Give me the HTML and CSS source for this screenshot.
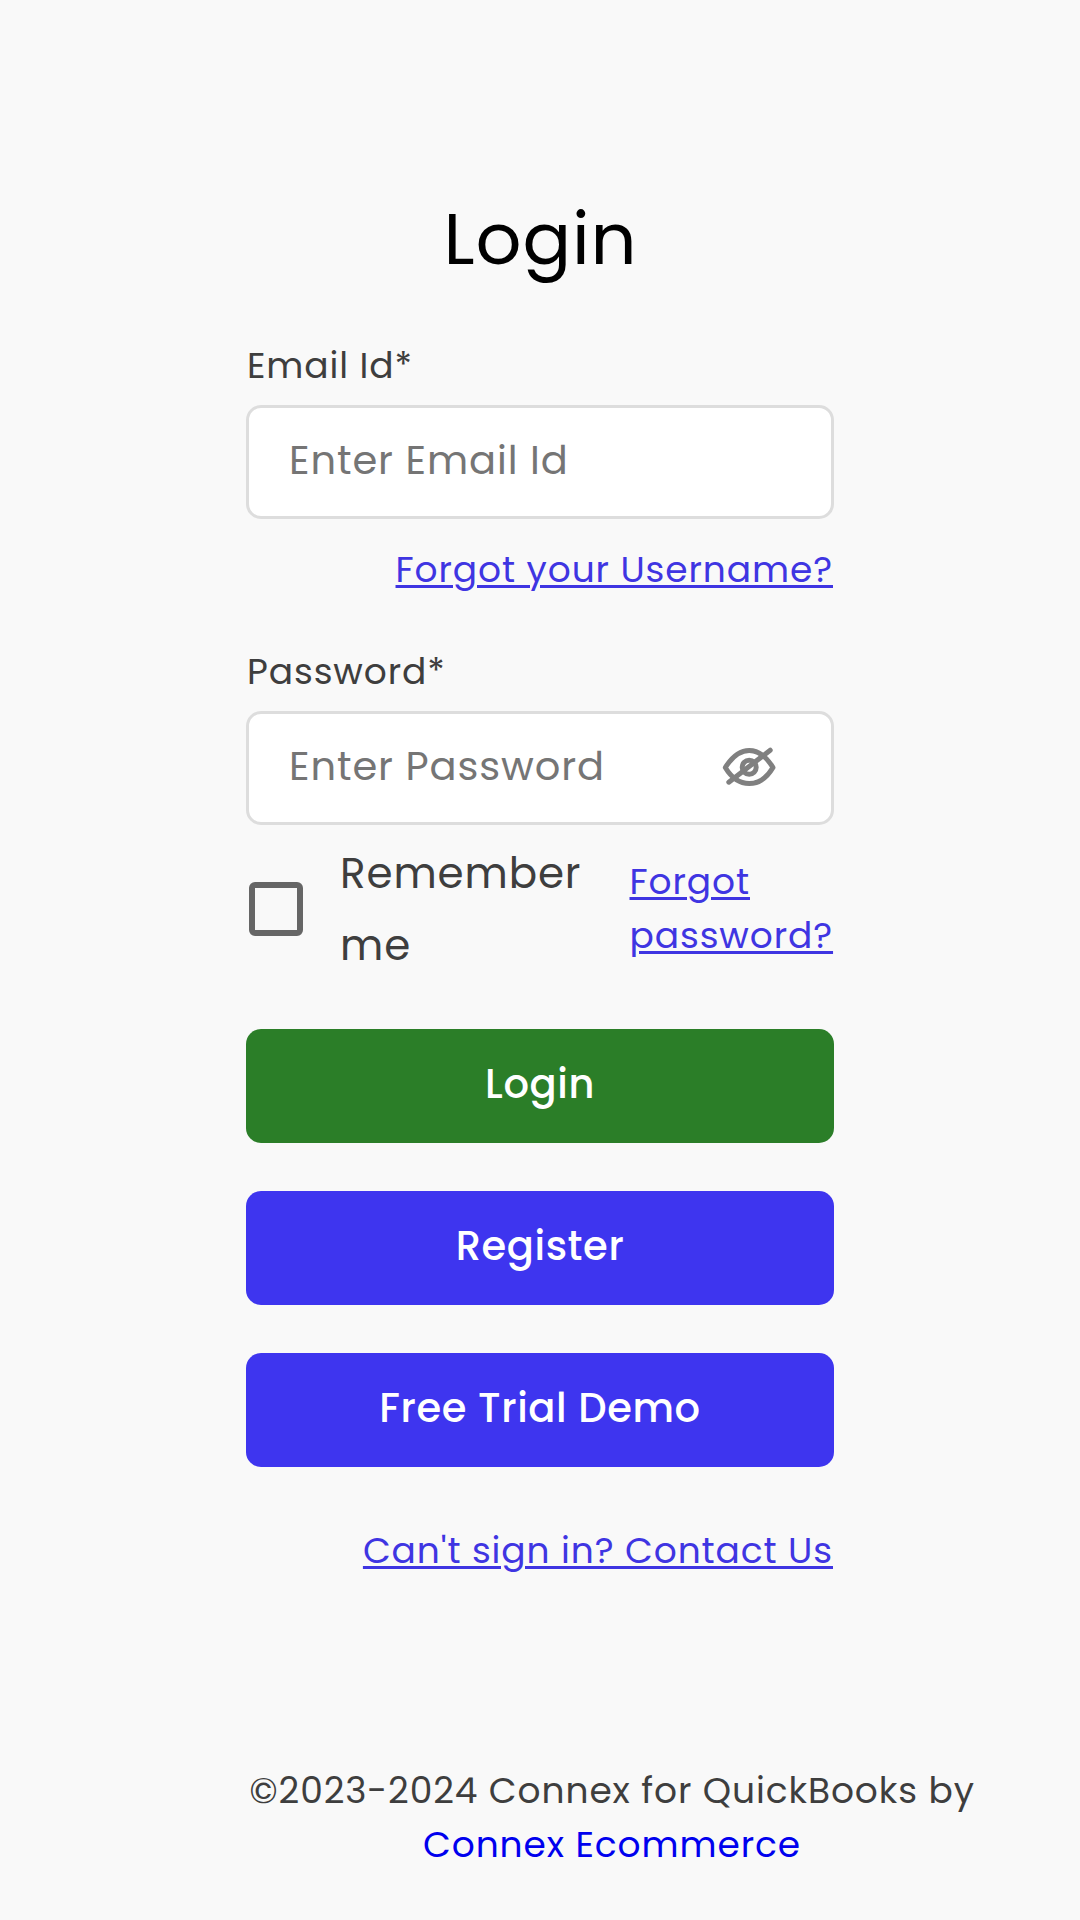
FILE: index.html
```html
<!DOCTYPE html>
<html lang="en">
<head>
  <meta charset="utf-8">
  <title>Login</title>
  <link rel="stylesheet" href="styles.css">
</head>
<body>
  <main class="login">
    <h1 class="title">Login</h1>
    <form class="form">
      <label class="label" for="email">Email Id*</label>
      <div class="field"><input class="input" id="email" type="text" placeholder="Enter Email Id"></div>
      <a class="link link-username" href="#">Forgot your Username?</a>

      <label class="label" for="password">Password*</label>
      <div class="field">
        <input class="input" id="password" type="password" placeholder="Enter Password">
        <svg class="eye" viewBox="0 0 60 48" width="60" height="48" aria-hidden="true">
          <path d="M5.300 23.500C11 14.500 19 6.500 29.200 6.500S47.400 14.500 53 23.500C47.400 33 39.400 39.500 29.200 39.500S11 33 5.300 23.500Z"/>
          <circle cx="29.200" cy="23.300" r="7"/>
          <path d="M8.800 38.200L50.200 6.200"/>
        </svg>
      </div>

      <div class="options">
        <span class="checkbox" role="checkbox" aria-checked="false"></span>
        <span class="remember">Remember me</span>
        <a class="link link-password" href="#">Forgot password?</a>
      </div>

      <button class="button button-login" type="button">Login</button>
      <button class="button" type="button">Register</button>
      <button class="button" type="button">Free Trial Demo</button>
      <a class="link link-contact" href="#">Can't sign in? Contact Us</a>
    </form>
  </main>
  <footer class="footer">
    <div class="copyright">©2023-2024 Connex for QuickBooks by</div>
    <a class="company" href="#">Connex Ecommerce</a>
  </footer>
</body>
</html>
```
FILE: styles.css
```css
* {
  box-sizing: border-box;
}

body {
  margin: 0;
  min-height: 1920px;
  background: #f9f9f9;
  color: #3e3e3e;
  font-family: Poppins, Inter, sans-serif;
  font-size: 36px;
  line-height: 54px;
  letter-spacing: 0.9px;
}

.login {
  width: 588px;
  margin: 0 auto;
  padding-top: 185px;
}

.title {
  margin: 0 0 46px;
  padding-left: 1px;
  color: #000;
  font-size: 72px;
  font-weight: 400;
  line-height: 108px;
  text-align: center;
}

.form {
  display: flex;
  flex-direction: column;
}

.label {
  margin-bottom: 12px;
  padding-left: 1px;
}

.field {
  display: flex;
  align-items: center;
  height: 114px;
  padding: 0 51px 0 40px;
  border: 3px solid #ddd;
  border-radius: 15px;
  background: #fff;
}

.input {
  flex: 1;
  min-width: 0;
  height: 100%;
  padding: 0 0 4px;
  border: 0;
  outline: 0;
  background: transparent;
  font-family: inherit;
  font-size: 40px;
  letter-spacing: inherit;
}

.input::placeholder {
  color: #757575;
}

.eye {
  flex: none;
  fill: none;
  stroke: #808080;
  stroke-width: 5;
  stroke-linecap: round;
  stroke-linejoin: round;
}

.link {
  color: #3f35e2;
  text-decoration: underline;
  text-decoration-thickness: 3px;
  text-underline-offset: 3px;
}

.link-username {
  align-self: flex-end;
  margin: 24px 1px 48px;
}

.options {
  display: flex;
  align-items: center;
  margin: 12px 0 48px;
  padding-left: 3px;
}

.checkbox {
  flex: none;
  width: 54px;
  height: 54px;
  border: 6px solid #666;
  border-radius: 6px;
}

.remember {
  width: 250px;
  margin: 1px 0 -1px 37px;
  font-size: 42px;
  line-height: 72px;
}

.link-password {
  width: 204.500px;
  margin-left: auto;
}

.button {
  height: 114px;
  padding: 0 0 4px;
  border: 0;
  border-radius: 15px;
  background: #3e35ef;
  color: #fff;
  font-family: inherit;
  font-size: 40px;
  font-weight: 500;
  letter-spacing: 0.6px;
}

.button + .button {
  margin-top: 48px;
}

.button-login {
  background: #2b7e28;
}

.link-contact {
  align-self: flex-end;
  margin: 57px 1px 0 0;
}

.footer {
  width: 726px;
  margin: 186px 0 0 249px;
  text-align: center;
  white-space: nowrap;
}

.company {
  color: #0000ee;
  text-decoration: none;
}
```
